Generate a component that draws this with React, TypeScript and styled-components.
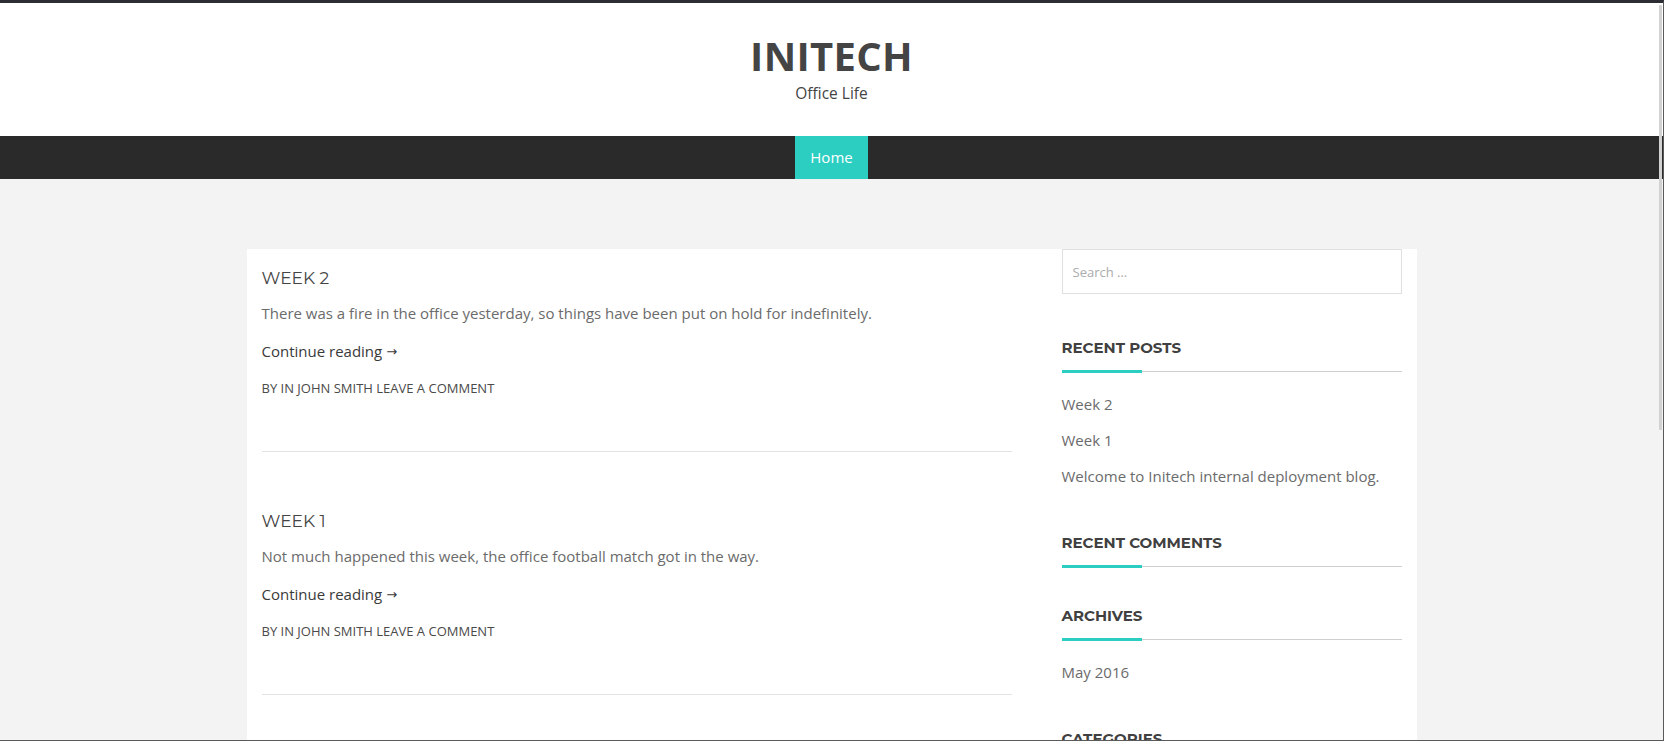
import React from "react";
import styled, { createGlobalStyle } from "styled-components";

const GlobalStyle = createGlobalStyle`
  html, body { margin: 0; padding: 0; }
  body {
    font-family: "Open Sans", "Noto Sans", sans-serif;
    background: #f3f3f3;
  }
  * { box-sizing: border-box; }
`;

const Frame = styled.div`
  position: relative;
  height: 741px;
  overflow: hidden;
  background: #f3f3f3;
  border-top: 3px solid #2b2d33;
  border-right: 1px solid #5a5a5a;
  border-bottom: 1px solid #5a5a5a;
`;

const ScrollThumb = styled.div`
  position: absolute;
  top: 2px;
  right: 1px;
  width: 3px;
  height: 425px;
  background: #d2d2d2;
  border-radius: 1px;
`;

const Header = styled.header`
  background: #ffffff;
  height: 133px;
  display: flex;
  flex-direction: column;
  align-items: center;
  padding-top: 27px;
`;

const SiteTitle = styled.h1`
  margin: 0;
  font-family: "Open Sans", sans-serif;
  font-weight: 700;
  font-size: 40px;
  line-height: 52px;
  letter-spacing: 0.3px;
  color: #444444;
`;

const Tagline = styled.p`
  margin: 0;
  font-size: 15.5px;
  line-height: 22px;
  color: #444444;
`;

const NavBar = styled.nav`
  background: #2a2a2a;
  height: 43px;
  display: flex;
  justify-content: center;
`;

const NavItem = styled.a<{ $active?: boolean }>`
  display: block;
  padding: 0 15px;
  line-height: 43px;
  font-size: 15px;
  color: #ffffff;
  text-decoration: none;
  background: ${(p) => (p.$active ? "#2bcec1" : "transparent")};
`;

const Main = styled.main`
  padding-top: 70px;
`;

const Container = styled.div`
  width: 1170px;
  margin: 0 auto;
  background: #ffffff;
  padding: 0 15px;
  display: grid;
  grid-template-columns: 750px 340px;
  column-gap: 50px;
  min-height: 700px;
`;

const PostList = styled.div`
  display: flex;
  flex-direction: column;
`;

const Article = styled.article`
  padding: 15px 0 53px;
  border-bottom: 1px solid #e3e3e3;
  margin-bottom: 40px;
`;

const PostTitle = styled.h2`
  margin: 0;
  font-family: "Montserrat", "Inter", sans-serif;
  font-weight: 400;
  font-size: 17px;
  line-height: 28px;
  color: #444444;
  text-transform: uppercase;
`;

const Excerpt = styled.p`
  margin: 9px 0 0;
  font-size: 15px;
  line-height: 24px;
  color: #6b6b6b;
`;

const MoreLink = styled.a`
  display: block;
  margin-top: 14px;
  font-size: 15px;
  line-height: 24px;
  color: #3a3a3a;
  text-decoration: none;
`;

const Arrow = styled.span`
  font-family: "DejaVu Sans", "Liberation Sans", sans-serif;
  font-size: 13px;
  vertical-align: 1px;
`;

const Meta = styled.div`
  margin-top: 14px;
  font-size: 13px;
  line-height: 20px;
  color: #4a4a4a;
  text-transform: uppercase;
`;

const Sidebar = styled.aside`
  display: flex;
  flex-direction: column;
`;

const SearchInput = styled.input`
  width: 100%;
  height: 45px;
  border: 1px solid #e0e0e0;
  padding: 0 10px;
  font-family: "Open Sans", sans-serif;
  font-size: 13px;
  color: #555;
  outline: none;
  margin: 0 0 44px;
  &::placeholder { color: #ababab; }
`;

const Widget = styled.section`
  margin-bottom: 39px;
`;

const WidgetTitle = styled.h3`
  position: relative;
  margin: 0;
  padding-bottom: 13px;
  border-bottom: 1px solid #cfcfcf;
  font-family: "Montserrat", "Inter", sans-serif;
  font-weight: 700;
  font-size: 15px;
  line-height: 20px;
  color: #404040;
  text-transform: uppercase;
  &::after {
    content: "";
    position: absolute;
    left: 0;
    bottom: -2px;
    width: 80px;
    height: 3px;
    background: #2bcec1;
  }
`;

const WidgetList = styled.ul`
  list-style: none;
  margin: 14px 0 0;
  padding: 0;
`;

const WidgetItem = styled.li`
  padding: 6px 0;
  font-size: 15px;
  line-height: 24px;
  color: #6b6b6b;
`;

const posts = [
  {
    title: "Week 2",
    excerpt:
      "There was a fire in the office yesterday, so things have been put on hold for indefinitely.",
  },
  {
    title: "Week 1",
    excerpt:
      "Not much happened this week, the office football match got in the way.",
  },
];

const widgets: { title: string; items: string[] }[] = [
  {
    title: "Recent Posts",
    items: ["Week 2", "Week 1", "Welcome to Initech internal deployment blog."],
  },
  { title: "Recent Comments", items: [] },
  { title: "Archives", items: ["May 2016"] },
  { title: "Categories", items: ["Uncategorized"] },
];

export default function App() {
  return (
    <>
      <GlobalStyle />
      <Frame>
        <Header>
          <SiteTitle>INITECH</SiteTitle>
          <Tagline>Office Life</Tagline>
        </Header>
        <NavBar>
          <NavItem $active href="#">
            Home
          </NavItem>
        </NavBar>
        <Main>
          <Container>
            <PostList>
              {posts.map((p) => (
                <Article key={p.title}>
                  <PostTitle>{p.title}</PostTitle>
                  <Excerpt>{p.excerpt}</Excerpt>
                  <MoreLink href="#">
                    Continue reading <Arrow>→</Arrow>
                  </MoreLink>
                  <Meta>By In John Smith Leave a comment</Meta>
                </Article>
              ))}
            </PostList>
            <Sidebar>
              <SearchInput placeholder="Search …" />
              {widgets.map((w) => (
                <Widget key={w.title}>
                  <WidgetTitle>{w.title}</WidgetTitle>
                  {w.items.length > 0 && (
                    <WidgetList>
                      {w.items.map((i) => (
                        <WidgetItem key={i}>{i}</WidgetItem>
                      ))}
                    </WidgetList>
                  )}
                </Widget>
              ))}
            </Sidebar>
          </Container>
        </Main>
        <ScrollThumb />
      </Frame>
    </>
  );
}
